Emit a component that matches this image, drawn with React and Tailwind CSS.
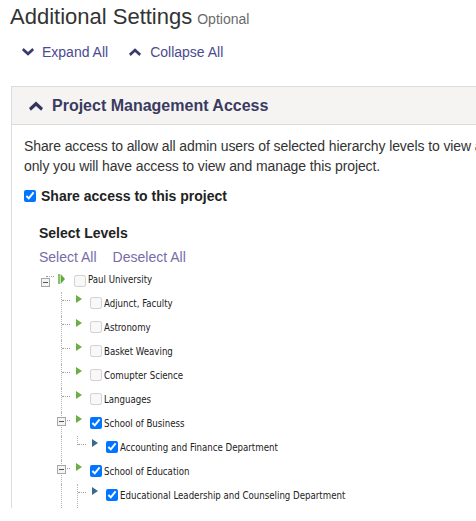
import { useState } from 'react'

const TREE = [
  { id: 'root', label: 'Paul University', level: 0, kind: 'root', checked: false },
  { id: 'adj', label: 'Adjunct, Faculty', level: 1, kind: 'leaf', checked: false },
  { id: 'ast', label: 'Astronomy', level: 1, kind: 'leaf', checked: false },
  { id: 'bas', label: 'Basket Weaving', level: 1, kind: 'leaf', checked: false },
  { id: 'cs', label: 'Comupter Science', level: 1, kind: 'leaf', checked: false },
  { id: 'lang', label: 'Languages', level: 1, kind: 'leaf', checked: false },
  { id: 'bus', label: 'School of Business', level: 1, kind: 'open', checked: true },
  { id: 'acc', label: 'Accounting and Finance Department', level: 2, kind: 'leaf', checked: true, last: true },
  { id: 'edu', label: 'School of Education', level: 1, kind: 'open', checked: true },
  { id: 'elc', label: 'Educational Leadership and Counseling Department', level: 2, kind: 'leaf', checked: true },
  // next child only peeks in at the clipped bottom edge
  { id: 'more', label: '', level: 2, kind: 'leaf', checked: true },
]

function ChevronDown({ className = '' }) {
  return (
    <svg viewBox="0 0 12 8" className={className} fill="currentColor">
      <path d="M1.6 0 6 4 10.4 0 12 2.2 6 7.8 0 2.2Z" />
    </svg>
  )
}

function ChevronUp({ className = '' }) {
  return (
    <svg viewBox="0 0 12 8" className={className} fill="currentColor">
      <path d="M1.6 8 6 4 10.4 8 12 5.8 6 0.2 0 5.8Z" />
    </svg>
  )
}

function MinusBox() {
  return (
    <span className="relative z-10 flex h-[9px] w-[9px] items-center justify-center border border-[#a6a6a6] bg-[#f4f4f4]">
      <span className="h-px w-[5px] bg-[#555]" />
    </span>
  )
}

function Arrow({ kind, level }) {
  if (kind === 'root') {
    return (
      <svg viewBox="0 0 7 10" className="mt-[6px] ml-[4px] h-[10px] w-[7px]">
        <rect x="0" y="0" width="2" height="10" fill="#8cc06e" />
        <path d="M2.6 0 7 5 2.6 10Z" fill="#63a83f" />
      </svg>
    )
  }
  const color = level === 2 ? '#3c6a8e' : '#6cae45'
  return (
    <svg viewBox="0 0 6 8" className="mt-[3px] ml-[6px] h-[8px] w-[6px]">
      <path d="M0 0 6 4 0 8Z" fill={color} />
    </svg>
  )
}

function TreeRow({ node }) {
  const { level, kind, last } = node
  return (
    <div className="flex h-[24px] items-start">
      {level >= 1 && <div className="w-[16px] shrink-0" />}
      {level >= 2 && (
        <div className="relative h-full w-[16px] shrink-0">
          <span className="absolute left-[7px] top-0 h-full border-l border-dotted border-[#b5b5b5]" />
        </div>
      )}
      <div className="relative h-full w-[16px] shrink-0">
        {level >= 1 && (
          <span
            className={`absolute left-[7px] top-0 border-l border-dotted border-[#b5b5b5] ${
              last ? 'h-[9px]' : 'h-full'
            }`}
          />
        )}
        <span className="absolute left-[8px] top-[8px] w-[8px] border-t border-dotted border-[#a0a0a0]" />
        {kind !== 'leaf' && (
          <span className={`absolute left-[3px] ${level === 0 ? 'top-[10px]' : 'top-[5px]'}`}>
            <MinusBox />
          </span>
        )}
      </div>
      <div className="h-full w-[16px] shrink-0">
        <Arrow kind={kind} level={level} />
      </div>
      <input
        type="checkbox"
        defaultChecked={node.checked}
        disabled={!node.checked}
        className={`m-0 ml-[4px] h-[12px] w-[12px] shrink-0 ${kind === 'root' ? 'mt-[7px]' : 'mt-[5px]'}`}
      />
      {node.label && (
        <span className="ml-[2px] whitespace-nowrap text-[9.6px] leading-[24px] text-[#222] [font-family:Tahoma,'DejaVu_Sans_Condensed','Liberation_Sans',sans-serif]">
          {node.label}
        </span>
      )}
    </div>
  )
}

export default function App() {
  const [open, setOpen] = useState(true)

  return (
    <div className="h-[521px] w-[476px] overflow-hidden bg-white text-[#333] [font-family:'Liberation_Sans',Arial,sans-serif]">
      <div className="flex items-baseline px-[10px] pt-[1px]">
        <h1 className="text-[22px] leading-[32px] text-[#333]">Additional Settings</h1>
        <span className="ml-[5px] text-[14px] text-[#6b6b6b]">Optional</span>
      </div>

      <div className="mt-[9px] flex items-center pl-[22px] text-[14px] leading-[20px] text-[#4a4a8e]">
        <button type="button" className="flex items-center">
          <ChevronDown className="h-[8px] w-[12px] text-[#3b3a6e]" />
          <span className="ml-[8px]">Expand All</span>
        </button>
        <button type="button" className="ml-[21px] flex items-center">
          <ChevronUp className="h-[8px] w-[12px] text-[#3b3a6e]" />
          <span className="ml-[9px]">Collapse All</span>
        </button>
      </div>

      <div className="mt-[24px] ml-[11px] h-[422px] w-[720px] overflow-hidden border-t border-l border-r border-[#dcdcdc]">
        <button
          type="button"
          onClick={() => setOpen(!open)}
          className="flex h-[38px] w-full items-center border-b border-[#dcdcdc] bg-[#f5f4f3] pl-[17px] text-left"
        >
          <ChevronUp className="h-[10px] w-[14px] text-[#35345e]" />
          <span className="ml-[9px] text-[16px] font-bold text-[#3a3a60]">Project Management Access</span>
        </button>

        {open && (
          <div className="px-[12px] pt-[11px]">
            <p className="whitespace-nowrap text-[14px] leading-[20px] tracking-[-0.1px] text-[#333]">
              Share access to allow all admin users of selected hierarchy levels to view and manage this project. If not shared,
              <br />
              only you will have access to view and manage this project.
            </p>

            <label className="mt-[10px] flex items-center text-[14px] font-bold leading-[20px] text-[#222]">
              <input type="checkbox" defaultChecked className="m-0 h-[12px] w-[12px]" />
              <span className="ml-[5px]">Share access to this project</span>
            </label>

            <div className="pl-[15px] pt-[17px]">
              <div className="text-[14px] font-bold leading-[20px] text-[#222]">Select Levels</div>
              <div className="mt-[4px] flex text-[14px] leading-[20px] text-[#776ca9]">
                <button type="button">Select All</button>
                <button type="button" className="ml-[16px]">Deselect All</button>
              </div>
              <div className="-ml-[1px] mt-[1px]">
                {TREE.map((n) => (
                  <TreeRow key={n.id} node={n} />
                ))}
              </div>
            </div>
          </div>
        )}
      </div>
    </div>
  )
}
